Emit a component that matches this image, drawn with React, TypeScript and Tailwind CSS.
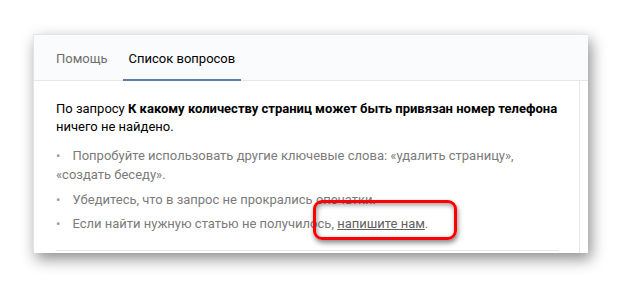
import React from "react";

export default function App() {
  return (
    <div
      className="w-[621px] h-[286px] bg-white pl-[33px] pt-[34px] relative overflow-hidden"
      style={{ fontFamily: "Roboto, 'Liberation Sans', sans-serif" }}
    >
      <div className="w-[555px] h-[219px] bg-white flex flex-col shadow-[3px_6px_14px_rgba(0,0,0,0.45)] border-l border-t border-[#e3e4e8]">
        <div className="h-[46px] bg-[#fafbfc] border-b border-[#e7e8ec] flex items-end pl-[22px] text-[13px]">
          <div className="h-full flex items-center text-[#6d6d6d] pt-[2px]">Помощь</div>
          <div className="h-full ml-[15px] px-[6px] flex items-center text-[#000] border-b-2 border-[#5b7fa6] mb-[-1px] pt-[3px]">
            Список вопросов
          </div>
        </div>
        <div className="flex-1 flex">
          <div className="flex-1 pl-[22px] pr-[20px] pt-[19px] border-r border-[#e7e8ec] flex flex-col">
            <div className="text-[13px] leading-[18px] text-black">
              По запросу <b className="font-bold">К какому количеству страниц может быть привязан номер телефона</b> ничего не найдено.
            </div>
            <div className="mt-[10px] text-[13px] leading-[19px] text-[#7b7b7b]">
              <div>
                <span className="text-[#9a9a9a] mr-[12px]">•</span>Попробуйте использовать другие ключевые слова: «удалить страницу», «создать беседу».
              </div>
              <div className="mt-[6px]">
                <span className="text-[#9a9a9a] mr-[12px]">•</span>Убедитесь, что в запрос не прокрались опечатки.
              </div>
              <div className="mt-[5px]">
                <span className="text-[#9a9a9a] mr-[12px]">•</span>Если найти нужную статью не получилось,{" "}
                <span className="underline text-[#5f5f5f]">напишите нам</span>.
              </div>
            </div>
            <div className="mt-auto mb-[2px] border-t border-[#e7e8ec]" />
          </div>
          <div className="w-[8px]" />
        </div>
      </div>
      <div className="absolute left-[313px] top-[200px] w-[144px] h-[40px] rounded-[9px] border-[3px] border-[#f00] shadow-[1px_3px_5px_rgba(0,0,0,0.45),inset_1px_2px_5px_rgba(0,0,0,0.4)]" />
    </div>
  );
}
